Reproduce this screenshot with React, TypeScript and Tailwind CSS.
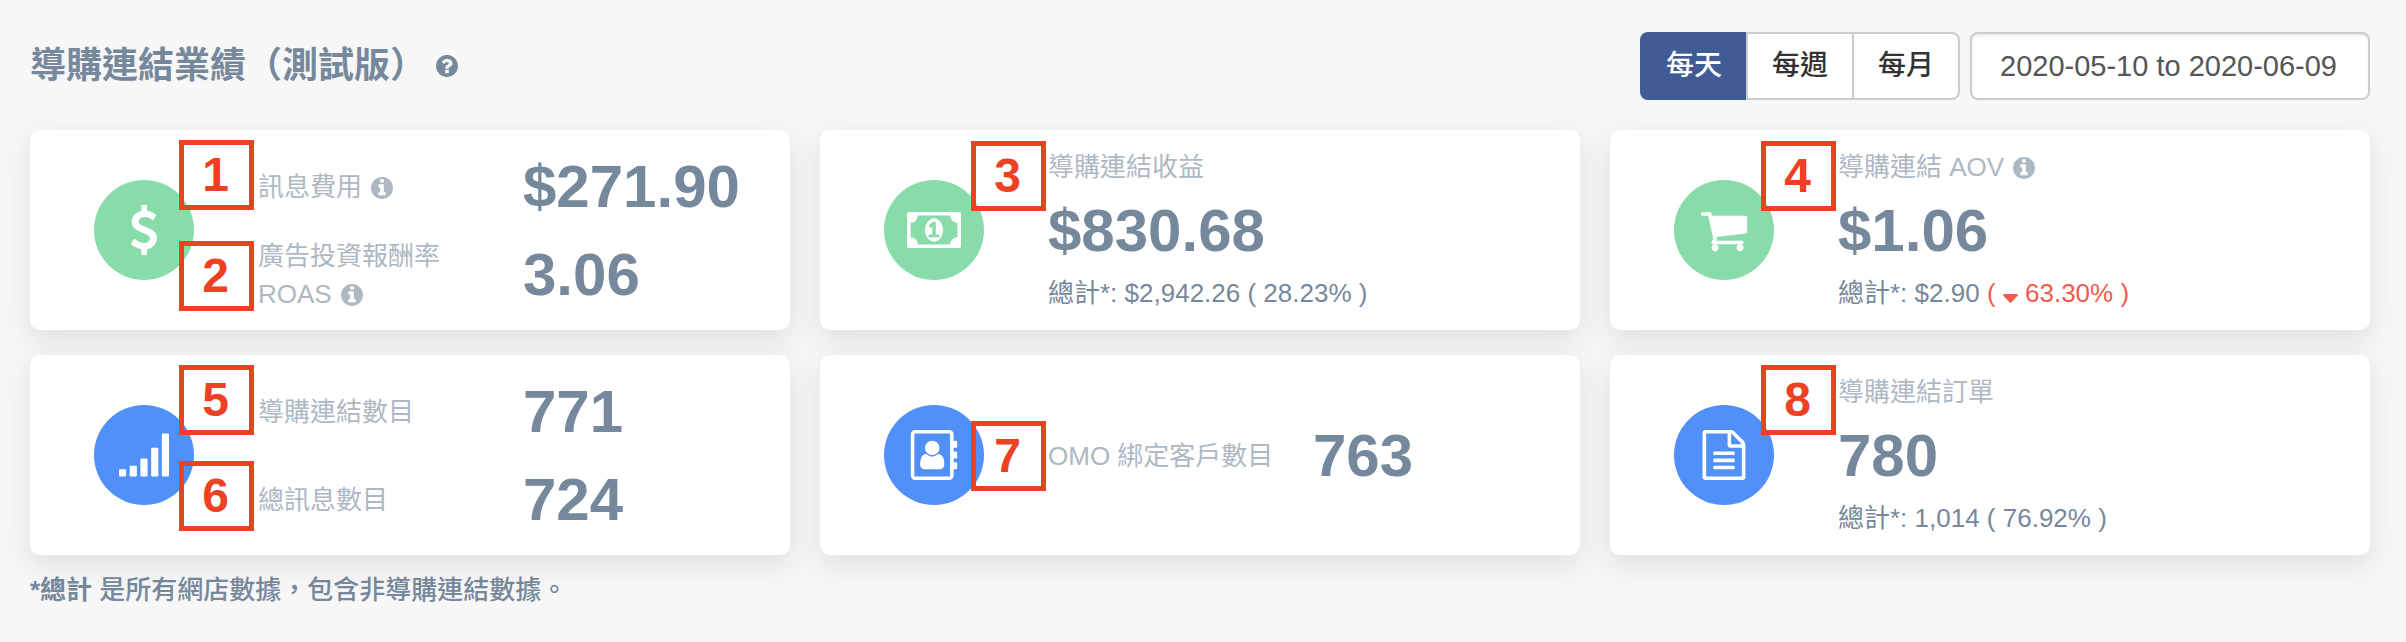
import { useState, type ReactNode } from 'react';

function InfoIcon() {
  return (
    <svg viewBox="128 128 1536 1536" className="ml-0.5 inline-block size-[22px] shrink-0 align-[-3px]" fill="currentColor" role="img" aria-label="說明">
      <path d="M1152 1376v-160q0-14-9-23t-23-9h-96v-512q0-14-9-23t-23-9h-320q-14 0-23 9t-9 23v160q0 14 9 23t23 9h96v320h-96q-14 0-23 9t-9 23v160q0 14 9 23t23 9h448q14 0 23-9t9-23zm-128-896v-160q0-14-9-23t-23-9h-192q-14 0-23 9t-9 23v160q0 14 9 23t23 9h192q14 0 23-9t9-23zm640 416q0 209-103 385.5t-279.5 279.5-385.5 103-385.5-103-279.5-279.5-103-385.5 103-385.5 279.5-279.5 385.5-103 385.5 103 279.5 279.5 103 385.5z" />
    </svg>
  );
}

function QuestionIcon() {
  return (
    <svg viewBox="128 128 1536 1536" className="size-[22px]" fill="currentColor" aria-hidden="true">
      <path d="M1024 1376v-192q0-14-9-23t-23-9h-192q-14 0-23 9t-9 23v192q0 14 9 23t23 9h192q14 0 23-9t9-23zm256-672q0-88-55.5-163t-138.5-116-170-41q-243 0-371 213-15 24 8 42l132 100q7 6 19 6 16 0 25-12 53-68 86-92 34-24 86-24 48 0 85.5 26t37.5 59q0 38-20 61t-68 45q-63 28-115.5 86.5t-52.5 125.5v36q0 14 9 23t23 9h192q14 0 23-9t9-23q0-19 21.5-49.5t54.5-49.5q32-18 49-28.5t46-35 44.5-48 28-60.5 12.5-81zm384 192q0 209-103 385.5t-279.5 279.5-385.5 103-385.5-103-279.5-279.5-103-385.5 103-385.5 279.5-279.5 385.5-103 385.5 103 279.5 279.5 103 385.5z" />
    </svg>
  );
}

function Glyph({ children, viewBox = '0 0 1792 1792', wide = false }: { children: ReactNode; viewBox?: string; wide?: boolean }) {
  return (
    <svg viewBox={viewBox} className={wide ? 'h-9 w-[54px]' : 'size-[50px]'} fill="currentColor" aria-hidden="true">
      {children}
    </svg>
  );
}

const dollar = (
  <Glyph>
    <path d="M1362 1185q0 153-99.5 263.5t-258.5 136.5v175q0 14-9 23t-23 9h-135q-13 0-22.5-9.5t-9.5-22.5v-175q-66-9-127.5-31t-101.5-44.5-74-48-46.5-37.5-17.5-18q-17-21-2-41l103-135q7-10 23-12 15-2 24 9l2 2q113 99 243 125 37 8 74 8 81 0 142.5-43t61.5-122q0-28-15-53t-33.5-42-58.5-37.5-66-32-80-32.5q-39-16-61.5-25t-61.5-26.5-62.5-31-56.5-35.5-53.5-42.5-43.5-49-35.5-58-21-66.5-8.5-78q0-138 98-242t255-134v-180q0-13 9.5-22.5t22.5-9.5h135q14 0 23 9t9 23v176q57 6 110.5 23t87 33.5 63.5 37.5 39 29 15 14q17 18 5 38l-81 146q-8 15-23 16-14 3-27-7-3-3-14.5-12t-39-26.5-58.5-32-74.5-26-85.5-11.5q-95 0-155 43t-60 111q0 26 8.5 48t29.5 41.5 39.5 33 56 31 60.5 27 70 27.5q53 20 81 31.5t76 35 75.5 42.5 62 50 53 63.5 31.5 76.5 13 94z" />
  </Glyph>
);

const money = (
  <Glyph viewBox="0 0 1920 1280" wide>
    <path d="M768 896h384v-96h-128v-448h-114l-148 137 77 80q42-37 55-57h2v288h-128v96zm512-256q0 70-21 142t-59.5 134-101.5 101-138 39-138-39-101.5-101-59.5-134-21-142 21-142 59.5-134 101.5-101 138-39 138 39 101.5 101 59.5 134 21 142zm512 256v-512q-106 0-181-75t-75-181h-1152q0 106-75 181t-181 75v512q106 0 181 75t75 181h1152q0-106 75-181t181-75zm128-832v1152q0 26-19 45t-45 19h-1792q-26 0-45-19t-19-45v-1152q0-26 19-45t45-19h1792q26 0 45 19t19 45z" />
  </Glyph>
);

const cart = (
  <Glyph>
    <path d="M704 1536q0 52-38 90t-90 38-90-38-38-90 38-90 90-38 90 38 38 90zm896 0q0 52-38 90t-90 38-90-38-38-90 38-90 90-38 90 38 38 90zm128-1088v512q0 24-16.5 42.5t-40.5 21.5l-1044 122q13 60 13 70 0 16-24 64h920q26 0 45 19t19 45-19 45-45 19h-1024q-26 0-45-19t-19-45q0-11 8-31.5t16-36 21.5-40 15.5-29.5l-177-823h-204q-26 0-45-19t-19-45 19-45 45-19h256q16 0 28.5 6.5t19.5 15.5 13 24.5 8 26 5.5 29.5 4.5 26h1201q26 0 45 19t19 45z" />
  </Glyph>
);

const signal = (
  <Glyph>
    <rect x="0" y="1408" width="256" height="256" rx="32" />
    <rect x="384" y="1280" width="256" height="384" rx="32" />
    <rect x="768" y="1024" width="256" height="640" rx="32" />
    <rect x="1152" y="640" width="256" height="1024" rx="32" />
    <rect x="1536" y="128" width="256" height="1536" rx="32" />
  </Glyph>
);

const addressBook = (
  <Glyph viewBox="-64 0 1792 1792">
    <path d="M1028 644q0 107-76.5 183t-183.5 76-183.5-76-76.5-183q0-108 76.5-184t183.5-76 183.5 76 76.5 184zm-48 220q46 0 82.5 17t60 47.5 39.5 67 24 81 11.5 82.5 3.5 79q0 67-39.5 118.5t-105.5 51.5h-576q-66 0-105.5-51.5t-39.5-118.5q0-48 4.5-93.5t18.5-98.5 36.5-91.5 63-64.5 93.5-26h5q7 4 32 19.5t35.5 21 33 17 37 16 35 9 39.5 4.5 39.5-4.5 35-9 37-16 33-17 35.5-21 32-19.5zm684-256q0 13-9.5 22.5t-22.5 9.5h-96v128h96q13 0 22.5 9.5t9.5 22.5v192q0 13-9.5 22.5t-22.5 9.5h-96v128h96q13 0 22.5 9.5t9.5 22.5v192q0 13-9.5 22.5t-22.5 9.5h-96v224q0 66-47 113t-113 47h-1216q-66 0-113-47t-47-113v-1472q0-66 47-113t113-47h1216q66 0 113 47t47 113v224h96q13 0 22.5 9.5t9.5 22.5v192zm-256 1024v-1472q0-13-9.5-22.5t-22.5-9.5h-1216q-13 0-22.5 9.5t-9.5 22.5v1472q0 13 9.5 22.5t22.5 9.5h1216q13 0 22.5-9.5t9.5-22.5z" />
  </Glyph>
);

const fileText = (
  <Glyph>
    <path d="M1596 380q28 28 48 76t20 88v1152q0 40-28 68t-68 28h-1344q-40 0-68-28t-28-68v-1600q0-40 28-68t68-28h896q40 0 88 20t76 48zm-444-244v376h376q-10-29-22-41l-313-313q-12-12-41-22zm384 1528v-1024h-416q-40 0-68-28t-28-68v-416h-768v1536h1280zm-1024-864q0-14 9-23t23-9h704q14 0 23 9t9 23v64q0 14-9 23t-23 9h-704q-14 0-23-9t-9-23v-64zm736 224q14 0 23 9t9 23v64q0 14-9 23t-23 9h-704q-14 0-23-9t-9-23v-64q0-14 9-23t23-9h704zm0 256q14 0 23 9t9 23v64q0 14-9 23t-23 9h-704q-14 0-23-9t-9-23v-64q0-14 9-23t23-9h704z" />
  </Glyph>
);

function Badge({ n, place }: { n: number; place: string }) {
  return (
    <span className={`absolute flex h-[70px] w-[75px] items-center justify-center border-5 border-[#ee4023] pr-0.5 text-5xl font-bold text-[#ee4023] ${place}`}>
      {n}
    </span>
  );
}

function Card({ color, icon, badges, children }: { color: string; icon: ReactNode; badges: ReactNode; children: ReactNode }) {
  return (
    <section className="relative flex min-h-[200px] items-center rounded-[10px] bg-white pl-16 shadow-[0_10px_30px_rgba(0,0,0,0.1)]">
      <div className={`flex size-[100px] shrink-0 items-center justify-center rounded-full text-white ${color}`}>{icon}</div>
      <div className="ml-16 flex-1">{children}</div>
      {badges}
    </section>
  );
}

function PairRow({ label, value }: { label: ReactNode; value: string }) {
  return (
    <div className="flex min-h-[88px] items-center pt-0.5">
      <div className="w-[265px] shrink-0 text-[#aeb8c3]">{label}</div>
      <div className="text-[60px] leading-[60px] font-bold">{value}</div>
    </div>
  );
}

function Stack({ label, value, total }: { label: ReactNode; value: string; total: ReactNode }) {
  return (
    <div>
      <div className="text-[#aeb8c3]">{label}</div>
      <div className="pt-0.5 text-[60px] leading-[86px] font-bold">{value}</div>
      <div>{total}</div>
    </div>
  );
}

const GREEN = 'bg-[#88dcaa]';
const BLUE = 'bg-[#5190f8]';

export default function App() {
  const [period, setPeriod] = useState('每天');
  const [range, setRange] = useState('2020-05-10 to 2020-06-09');

  return (
    <main
      lang="zh-Hant"
      className="min-h-screen bg-[#f7f7f7] pt-8 pr-9 pl-[30px] font-['Liberation_Sans','Noto_Sans_CJK_TC',sans-serif] text-[26px] leading-[38px] text-[#76889b]"
    >
      <header className="flex items-center justify-between">
        <div className="flex items-center gap-[10px]">
          <h1 className="text-4xl font-bold">導購連結業績（測試版）</h1>
          <button type="button" aria-label="說明">
            <QuestionIcon />
          </button>
        </div>
        <div className="flex gap-[10px] text-[28px]">
          <div className="flex font-medium" role="group" aria-label="期間">
            {['每天', '每週', '每月'].map((name) => (
              <button
                key={name}
                type="button"
                aria-pressed={period === name}
                onClick={() => setPeriod(name)}
                className={`-ml-0.5 h-[68px] w-[108px] border-2 first:rounded-l-lg last:rounded-r-lg ${
                  period === name ? 'border-[#415b94] bg-[#415b94] text-white' : 'border-[#cccccc] bg-white text-[#333333]'
                }`}
              >
                {name}
              </button>
            ))}
          </div>
          <input
            type="text"
            aria-label="日期範圍"
            value={range}
            onChange={(e) => setRange(e.target.value)}
            className="h-[68px] w-[400px] rounded-lg border-2 border-[#cccccc] bg-white px-7 text-[29px] text-[#555555] shadow-[inset_0_2px_2px_rgba(0,0,0,0.075)]"
          />
        </div>
      </header>

      <div className="mt-[30px] grid grid-cols-3 gap-x-[30px] gap-y-[25px]">
        <Card
          color={GREEN}
          icon={dollar}
          badges={
            <>
              <Badge n={1} place="left-[149px] top-[10px]" />
              <Badge n={2} place="left-[149px] top-[111px]" />
            </>
          }
        >
          <PairRow label={<>訊息費用 <InfoIcon /></>} value="$271.90" />
          <PairRow
            label={
              <>
                廣告投資報酬率 <span className="whitespace-nowrap">ROAS <InfoIcon /></span>
              </>
            }
            value="3.06"
          />
        </Card>

        <Card color={GREEN} icon={money} badges={<Badge n={3} place="left-[151px] top-[11px]" />}>
          <Stack label="導購連結收益" value="$830.68" total="總計*: $2,942.26 ( 28.23% )" />
        </Card>

        <Card color={GREEN} icon={cart} badges={<Badge n={4} place="left-[151px] top-[11px]" />}>
          <Stack
            label={<>導購連結 AOV <InfoIcon /></>}
            value="$1.06"
            total={
              <>
                總計*: $2.90{' '}
                <span className="text-[#f15b4f]">
                  ({' '}
                  <svg viewBox="0 0 15 9" className="inline-block h-[9px] w-[15px] align-[-1px]" fill="currentColor" aria-hidden="true">
                    <path d="M1 0H14Q15.5 .6 14.6 1.7L8.3 8.4Q7.5 9 6.7 8.4L.4 1.7Q-.5 .6 1 0Z" />
                  </svg>{' '}
                  63.30% )
                </span>
              </>
            }
          />
        </Card>

        <Card
          color={BLUE}
          icon={signal}
          badges={
            <>
              <Badge n={5} place="left-[149px] top-[10px]" />
              <Badge n={6} place="left-[149px] top-[106px]" />
            </>
          }
        >
          <PairRow label="導購連結數目" value="771" />
          <PairRow label="總訊息數目" value="724" />
        </Card>

        <Card color={BLUE} icon={addressBook} badges={<Badge n={7} place="left-[151px] top-[66px]" />}>
          <PairRow label="OMO 綁定客戶數目" value="763" />
        </Card>

        <Card color={BLUE} icon={fileText} badges={<Badge n={8} place="left-[151px] top-[10px]" />}>
          <Stack label="導購連結訂單" value="780" total="總計*: 1,014 ( 76.92% )" />
        </Card>
      </div>

      <p className="mt-4 font-medium">
        <strong className="font-bold">*總計</strong> 是所有網店數據，包含非導購連結數據。
      </p>
    </main>
  );
}
